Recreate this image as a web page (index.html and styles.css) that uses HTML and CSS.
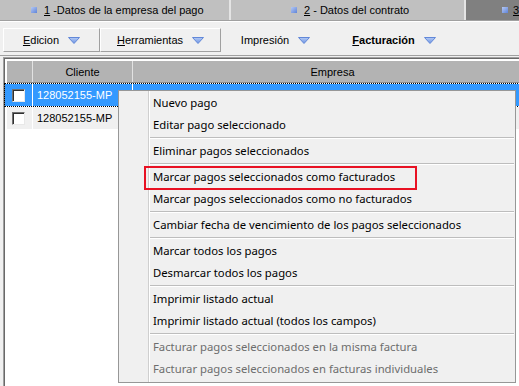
FILE: index.html
```html
<!DOCTYPE html>
<html lang="es">
<head>
<meta charset="utf-8">
<link rel="stylesheet" href="styles.css">
</head>
<body>
<div class="tabs">
  <div class="tab tab1"><span class="sq"></span><span><u>1</u> -Datos de la empresa del pago</span></div>
  <div class="tab-div"></div>
  <div class="tab tab2"><span class="sq"></span><span><u>2</u> - Datos del contrato</span></div>
  <div class="tab-div"></div>
  <div class="tab tab3"><span class="sq"></span><span><u>3</u></span></div>
</div>

<div class="toolbar">
  <div class="tb raised w1"><span><u>E</u>dicion</span><svg class="arr" width="12" height="7" viewBox="0 0 12 7"><defs><linearGradient id="g1" x1="0" y1="0" x2="0" y2="1"><stop offset="0" stop-color="#b4cbf5"/><stop offset="1" stop-color="#6d93e2"/></linearGradient></defs><polygon points="0.5,0.5 11.5,0.5 6,6.5" fill="url(#g1)" stroke="#6288d8" stroke-width="1"/></svg></div>
  <div class="tb raised w2"><span><u>H</u>erramientas</span><svg class="arr" width="12" height="7" viewBox="0 0 12 7"><polygon points="0.5,0.5 11.5,0.5 6,6.5" fill="url(#g1)" stroke="#6288d8" stroke-width="1"/></svg></div>
  <div class="tb w3"><span>Impresión</span><svg class="arr" width="12" height="7" viewBox="0 0 12 7"><polygon points="0.5,0.5 11.5,0.5 6,6.5" fill="url(#g1)" stroke="#6288d8" stroke-width="1"/></svg></div>
  <div class="tb w4 bold"><span><u>F</u>acturación</span><svg class="arr" width="12" height="7" viewBox="0 0 12 7"><polygon points="0.5,0.5 11.5,0.5 6,6.5" fill="url(#g1)" stroke="#6288d8" stroke-width="1"/></svg></div>
</div>

<div class="gridwrap">
  <div class="grid">
    <div class="row head">
      <div class="c c1"></div>
      <div class="c c2 center">Cliente</div>
      <div class="c c3 center">Empresa</div>
    </div>
    <div class="row sel">
      <div class="c c1"><span class="chk"></span></div>
      <div class="c c2">128052155-MP</div>
      <div class="c c3"></div>
    </div>
    <div class="row alt">
      <div class="c c1"><span class="chk"></span></div>
      <div class="c c2">128052155-MP</div>
      <div class="c c3"></div>
    </div>
  </div>
</div>

<div class="menu">
  <div class="mi">Nuevo pago</div>
  <div class="mi">Editar pago seleccionado</div>
  <div class="ms"></div>
  <div class="mi">Eliminar pagos seleccionados</div>
  <div class="ms"></div>
  <div class="mi marked">Marcar pagos seleccionados como facturados<span class="redbox"></span></div>
  <div class="mi">Marcar pagos seleccionados como no facturados</div>
  <div class="ms"></div>
  <div class="mi">Cambiar fecha de vencimiento de los pagos seleccionados</div>
  <div class="ms"></div>
  <div class="mi">Marcar todos los pagos</div>
  <div class="mi">Desmarcar todos los pagos</div>
  <div class="ms"></div>
  <div class="mi">Imprimir listado actual</div>
  <div class="mi">Imprimir listado actual (todos los campos)</div>
  <div class="ms"></div>
  <div class="mi dis">Facturar pagos seleccionados en la misma factura</div>
  <div class="mi dis">Facturar pagos seleccionados en facturas individuales</div>
</div>
</body>
</html>
```

FILE: styles.css
```css
html, body {
  margin: 0;
  padding: 0;
}
body {
  width: 519px;
  height: 386px;
  overflow: hidden;
  position: relative;
  background: #f0f0f0;
  font-family: "Liberation Sans", Arial, sans-serif;
  font-size: 11px;
  color: #000;
}
u {
  text-underline-offset: 1px;
}

/* tabs */
.tabs {
  display: flex;
  height: 20px;
  background: #c0c0c0;
}
.tab {
  display: flex;
  align-items: center;
  gap: 7px;
  height: 20px;
  box-sizing: border-box;
  flex: none;
  white-space: nowrap;
  overflow: hidden;
}
.tab1 { width: 229px; padding-left: 31px; }
.tab2 { width: 233px; padding-left: 60px; }
.tab3 { flex: 1; background: #808080; padding-left: 36px; gap: 5px; }
.tab-div {
  width: 2px;
  background: #e4e4e4;
  flex: none;
}
.sq {
  width: 6px;
  height: 6px;
  flex: none;
  background: linear-gradient(135deg, #b5c8f2, #5f84d9);
}

/* toolbar */
.toolbar {
  display: flex;
  height: 36px;
  box-sizing: border-box;
  padding: 7px 0 0 3px;
  border-top: 1px solid #a0a0a0;
  border-bottom: 1px solid #a0a0a0;
  box-shadow: inset 0 1px #ffffff;
}
.tb {
  display: flex;
  align-items: center;
  justify-content: center;
  gap: 9px;
  height: 24px;
  box-sizing: border-box;
  border: 1px solid transparent;
  flex: none;
}
.raised {
  border-color: #ffffff #a0a0a0 #a0a0a0 #ffffff;
}
.w1 { width: 97px; }
.w2 { width: 121px; }
.w3 { width: 109px; }
.w4 { width: 128px; }
.bold { font-weight: bold; }
.arr { display: block; flex: none; }

/* grid */
.gridwrap {
  margin: 1px 0 0 3px;
  height: 340px;
  border-top: 1px solid #a0a0a0;
  border-left: 1px solid #a0a0a0;
  box-shadow: inset 1px 1px #696969;
  background: #ffffff;
  padding: 3px 0 0 3px;
  box-sizing: border-box;
}
.grid {
  display: flex;
  flex-direction: column;
  gap: 1px;
  width: 530px;
}
.row {
  display: flex;
  height: 22px;
}
.c {
  display: flex;
  align-items: center;
  box-sizing: border-box;
  border-right: 1px solid #ffffff;
  white-space: nowrap;
  padding-left: 4px;
}
.c1 { width: 26px; padding-left: 5px; }
.c2 { width: 100px; }
.c3 { width: 400px; }
.center { justify-content: center; padding-left: 0; }

.head {
  background: #b3b3b3;
  border-bottom: 1px solid #8c8c8c;
  box-sizing: border-box;
}
.head .c { border-right-color: #e2e2e2; }
.sel {
  background: #3399ff;
  color: #ffffff;
  outline: 1px dotted #000;
  outline-offset: 0;
  margin-left: -2px;
  padding-left: 2px;
}
.alt { background: #f0f0f0; }
.chk {
  width: 13px;
  height: 13px;
  box-sizing: border-box;
  background: #ffffff;
  border: 1px solid;
  border-color: #707070 #e8e8e8 #e8e8e8 #707070;
  box-shadow: inset 1px 1px #303030;
}

/* context menu */
.menu {
  position: absolute;
  left: 118px;
  top: 90px;
  width: 398px;
  height: 293px;
  box-sizing: border-box;
  border: 1px solid #979797;
  padding: 1px;
  background:
    linear-gradient(to right, transparent 29px, #cfcfcf 29px, #cfcfcf 30px, #ffffff 30px, #ffffff 31px, transparent 31px),
    #f0f0f0;
  font-family: "Noto Sans", "Open Sans", sans-serif;
  font-size: 11.3px;
}
.mi {
  height: 22px;
  line-height: 22px;
  padding-left: 33px;
  white-space: nowrap;
  color: #000;
  position: relative;
}
.mi.dis { color: #6d6d6d; }
.ms {
  height: 0;
  margin: 1px 0 1px 30px;
  border-top: 1px solid #bdbdbd;
  border-bottom: 1px solid #ffffff;
}
.redbox {
  position: absolute;
  left: 24px;
  top: 0;
  width: 273px;
  height: 24px;
  box-sizing: border-box;
  border: 2px solid #e81123;
}
```
